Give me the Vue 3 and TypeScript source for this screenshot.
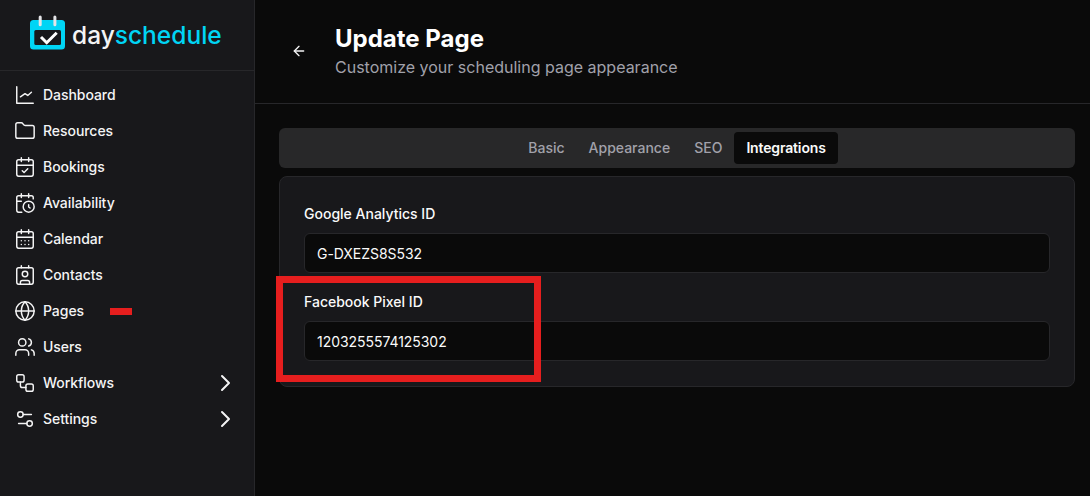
<script setup lang="ts">
type Shape = { tag: string; attrs: Record<string, string | number> }
const p = (d: string): Shape => ({ tag: 'path', attrs: { d } })
const c = (cx: number, cy: number, r: number): Shape => ({ tag: 'circle', attrs: { cx, cy, r } })
const r = (x: number, y: number, width: number, height: number, rx = 2): Shape => ({ tag: 'rect', attrs: { x, y, width, height, rx } })

const items: { label: string; chevron?: boolean; mark?: boolean; icon: Shape[] }[] = [
  { label: 'Dashboard', icon: [p('M3 3v18h18'), p('m19 9-4 3.5-3-2-5 3.5')] },
  { label: 'Resources', icon: [p('M20 20a2 2 0 0 0 2-2V8a2 2 0 0 0-2-2h-7.9a2 2 0 0 1-1.69-.9L9.6 3.9A2 2 0 0 0 7.93 3H4a2 2 0 0 0-2 2v13a2 2 0 0 0 2 2Z')] },
  { label: 'Bookings', icon: [p('M8 2v4'), p('M16 2v4'), r(3, 4, 18, 18), p('M3 10h18'), p('m9 16 2 2 4-4')] },
  { label: 'Availability', icon: [p('M21 7.5V6a2 2 0 0 0-2-2H5a2 2 0 0 0-2 2v14a2 2 0 0 0 2 2h3.5'), p('M16 2v4'), p('M8 2v4'), p('M3 10h5'), p('M17.5 17.5 16 16.3V14'), c(16, 16, 6)] },
  { label: 'Calendar', icon: [p('M8 2v4'), p('M16 2v4'), r(3, 4, 18, 18), p('M3 10h18'), p('M8 14h.01'), p('M12 14h.01'), p('M16 14h.01'), p('M8 18h.01'), p('M12 18h.01'), p('M16 18h.01')] },
  { label: 'Contacts', icon: [p('M16 2v2'), p('M7 22v-2a2 2 0 0 1 2-2h6a2 2 0 0 1 2 2v2'), p('M8 2v2'), c(12, 11, 3), r(3, 4, 18, 18)] },
  { label: 'Pages', mark: true, icon: [c(12, 12, 10), p('M12 2a14.5 14.5 0 0 0 0 20 14.5 14.5 0 0 0 0-20'), p('M2 12h20')] },
  { label: 'Users', icon: [p('M16 21v-2a4 4 0 0 0-4-4H6a4 4 0 0 0-4 4v2'), p('M16 3.128a4 4 0 0 1 0 7.744'), p('M22 21v-2a4 4 0 0 0-3-3.87'), c(9, 7, 4)] },
  { label: 'Workflows', chevron: true, icon: [r(3, 3, 8, 8), p('M7 11v4a2 2 0 0 0 2 2h4'), r(13, 13, 8, 8)] },
  { label: 'Settings', chevron: true, icon: [p('M14 17H5'), p('M19 7h-9'), c(17, 17, 3), c(7, 7, 3)] },
]
const tabs = ['Basic', 'Appearance', 'SEO', 'Integrations']
const fields = [
  { label: 'Google Analytics ID', value: 'G-DXEZS8S532' },
  { label: 'Facebook Pixel ID', value: '1203255574125302' },
]
</script>

<template>
  <div class="app">
    <aside class="sidebar">
      <div class="brand">
        <svg class="logo" viewBox="0 0 37 36" width="37" height="36" aria-hidden="true">
          <rect x="1" y="5" width="35" height="29.5" rx="3.5" fill="#00d5f5" />
          <rect x="5.3" y="15" width="26.7" height="15" rx="1.5" fill="#18181b" />
          <rect x="9.7" y="0.4" width="3" height="10.8" rx="1.5" fill="#e4e4e7" />
          <rect x="24.4" y="0.4" width="3" height="10.8" rx="1.5" fill="#e4e4e7" />
          <path d="M12 22l5.7 5.7 10-10" fill="none" stroke="#fff" stroke-width="3" />
        </svg>
        <span class="wordmark"><span class="day">day</span><span class="schedule">schedule</span></span>
      </div>
      <nav class="nav">
        <a v-for="item in items" :key="item.label" class="nav-item">
          <svg class="icon" viewBox="0 0 24 24" width="22" height="22" aria-hidden="true">
            <component :is="s.tag" v-for="(s, i) in item.icon" :key="i" v-bind="s.attrs" />
          </svg>
          <span class="nav-label">{{ item.label }}</span>
          <i v-if="item.mark" class="mark"></i>
          <svg v-if="item.chevron" class="chevron" viewBox="0 0 24 24" width="24" height="24" aria-hidden="true">
            <path d="m9 5 7 7-7 7" />
          </svg>
        </a>
      </nav>
    </aside>
    <main class="main">
      <header class="header">
        <svg class="back" viewBox="0 0 24 24" width="16" height="16" aria-hidden="true">
          <path d="m12 19-7-7 7-7" />
          <path d="M19 12H5" />
        </svg>
        <div class="titles">
          <h1>Update Page</h1>
          <p>Customize your scheduling page appearance</p>
        </div>
      </header>
      <section class="content">
        <div class="tabs">
          <button v-for="tab in tabs" :key="tab" class="tab" :class="{ active: tab === 'Integrations' }">{{ tab }}</button>
        </div>
        <div class="card">
          <label v-for="f in fields" :key="f.label" class="field">
            <span class="label">{{ f.label }}</span>
            <input class="input" :value="f.value" readonly />
          </label>
          <div class="highlight"></div>
        </div>
      </section>
    </main>
  </div>
</template>

<style>
html, body { background: #0a0a0a; }
</style>

<style scoped>
.app {
  display: flex;
  width: 1090px;
  height: 496px;
  overflow: hidden;
  background: #0a0a0a;
  color: #fafafa;
  font-family: Inter, "Liberation Sans", sans-serif;
}
.sidebar {
  flex: 0 0 255px;
  background: #18181b;
  border-right: 1px solid #27272a;
  box-sizing: border-box;
}
.brand {
  height: 71px;
  box-sizing: border-box;
  border-bottom: 1px solid #27272a;
  display: flex;
  align-items: center;
  gap: 6px;
  padding: 0 0 0 29px;
}
.logo { margin-top: -4px; flex: none; }
.wordmark {
  font-size: 24.5px;
  font-weight: 500;
  line-height: 1;
}
.day { color: #f4f4f5; }
.schedule { color: #00d5f5; }
.nav { display: flex; flex-direction: column; padding-top: 6px; }
.nav-item {
  position: relative;
  display: flex;
  align-items: center;
  height: 36px;
  padding: 0 17px 0 14px;
  gap: 7px;
  font-size: 14px;
  font-weight: 500;
  color: #f4f4f5;
}
.nav-label { padding-bottom: 2px; letter-spacing: -0.05px; }
.icon, .chevron, .back {
  fill: none;
  stroke: currentColor;
  stroke-width: 1.6;
  stroke-linecap: round;
  stroke-linejoin: round;
  flex: none;
}
.chevron { margin-left: auto; stroke-width: 2; }
.mark {
  position: absolute;
  left: 110px;
  top: 15px;
  width: 22px;
  height: 7px;
  background: #e61e1e;
}
.main { flex: 1; min-width: 0; }
.header {
  height: 104px;
  box-sizing: border-box;
  border-bottom: 1px solid #27272a;
  display: flex;
  align-items: center;
  padding: 0 0 0 36px;
  gap: 28px;
}
.back { stroke-width: 2; margin-top: -1px; color: #f4f4f5; }
.titles { margin-top: -1px; }
h1 {
  margin: 0;
  font-size: 24px;
  line-height: 32px;
  font-weight: 700;
  color: #fff;
}
p {
  margin: 0;
  font-size: 16px;
  line-height: 24px;
  color: #a1a1aa;
}
.content { padding: 24px 15px 0 24px; }
.tabs {
  height: 40px;
  border-radius: 6px;
  background: #282829;
  display: flex;
  align-items: center;
  justify-content: center;
}
.tab {
  height: 32px;
  padding: 0 12px 2px;
  border: 0;
  border-radius: 4px;
  background: transparent;
  font: 500 14px Inter, "Liberation Sans", sans-serif;
  color: #a1a1aa;
}
.tab.active { background: #0a0a0a; color: #fafafa; font-weight: 600; letter-spacing: -0.15px; }
.card {
  position: relative;
  margin-top: 8px;
  box-sizing: border-box;
  height: 211px;
  padding: 24px;
  background: #18181b;
  border: 1px solid #27272a;
  border-radius: 8px;
  display: flex;
  flex-direction: column;
  gap: 16px;
}
.field { display: flex; flex-direction: column; gap: 7px; }
.label { padding-top: 1px; font-size: 14px; line-height: 24px; font-weight: 500; color: #fafafa; }
.input {
  height: 40px;
  box-sizing: border-box;
  border: 1px solid #27272a;
  border-radius: 6px;
  background: #0a0a0a;
  color: #fafafa;
  font: 400 14px Inter, "Liberation Sans", sans-serif;
  letter-spacing: -0.05px;
  padding: 0 12px;
  outline: none;
}
.highlight {
  position: absolute;
  left: -4px;
  top: 99px;
  width: 265px;
  height: 106px;
  box-sizing: border-box;
  border: 7px solid #e61e1e;
  pointer-events: none;
}
</style>
